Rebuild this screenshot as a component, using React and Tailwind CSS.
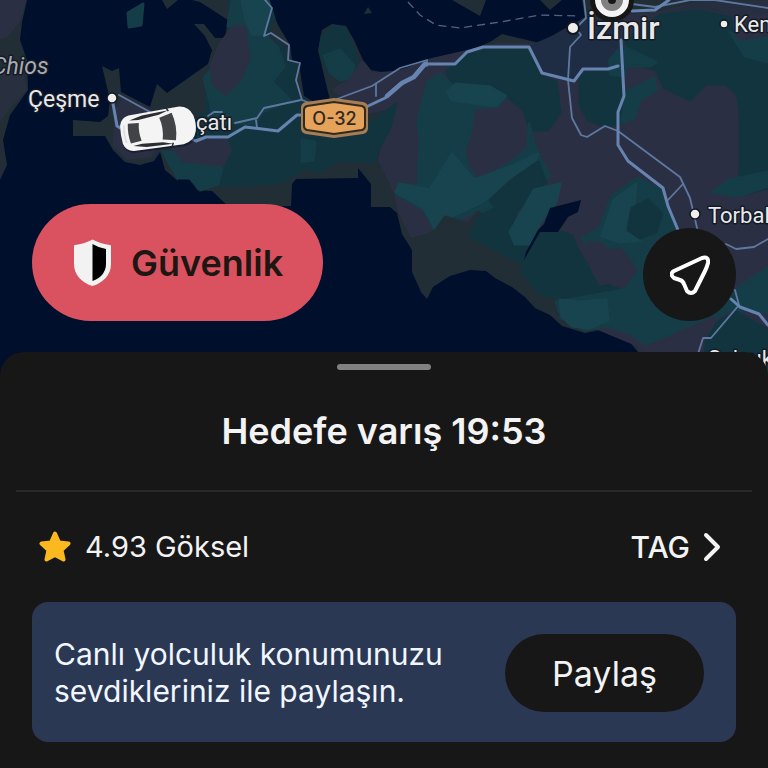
const SEA = '#000f2c'
const LAND = '#222e36'
const PLUM = '#2b2f44'
const PINE = '#12343f'
const MOSS = '#153d48'
const TEAL = '#18444f'
const SLATE = '#1f2d44'

const patches = [
  // western slopes
  { fill: PINE, d: 'M228 0H268L274 18L266 36L285 48L287 62L297 66L294 82L300 98L315 104L330 140L300 172L280 182L222 186L205 165L170 145L206 110V78L214 60L240 30Z' },
  { fill: MOSS, d: 'M232 0H268L271 10L264 34L278 48L284 66L272 82L290 100L262 112L255 124L215 122L204 78L214 66L235 90L248 60L240 28L228 26Z' },
  { fill: TEAL, d: 'M242 0H266L270 9L263 34L252 34L246 20Z' },
  { fill: PLUM, d: 'M234 26L245 28L249 58L240 80L226 94L213 84L211 66L220 44Z' },
  { fill: PLUM, d: 'M180 142L226 140L230 150L222 166L198 172L180 166L168 154Z' },
  { fill: MOSS, d: 'M163 152L172 152L182 164L222 168L218 184L200 190L190 178L178 178Z' },
  { fill: PLUM, d: 'M116 112L124 98L152 112L160 140L150 156L128 158L114 145Z' },
  { fill: MOSS, d: 'M128 13L143 4L141 25L129 27Z' },
  { fill: PLUM, d: 'M0 0H25L18 22L6 36L0 38Z' },
  { fill: '#282f3e', d: 'M0 76L22 72L25 90L8 108L0 120Z' },
  // central headland
  { fill: PINE, d: 'M322 36L333 26L345 28L353 46L359 70L344 82L328 72L320 52Z' },
  { fill: MOSS, d: 'M324 56L340 50L354 66L350 78L340 80L330 72Z' },
  { fill: PLUM, d: 'M334 90L350 80L362 62L372 74L400 72L430 60L500 44L544 45L562 33L586 20L768 2V384H650L638 345L590 325L560 318L530 295L510 265L450 225L412 236L399 210L396 194L380 160L384 138L392 108L368 112Z' },
  { fill: PINE, d: 'M302 142L330 136L372 122L396 104L390 128L378 150L374 162L340 160L318 172L302 166Z' },
  { fill: MOSS, d: 'M302 140L315 142L313 160L302 162Z' },
  { fill: PINE, d: 'M446 72L468 54L486 50H528L540 76L556 82L560 112L548 130L530 130L524 110L505 95L490 86L455 86Z' },
  { fill: MOSS, d: 'M428 82L440 74L453 86L490 87L506 96L498 106L474 108L470 134L464 150L468 168L478 181L512 162L528 148L529 124L536 150L550 176L530 196L500 208L470 214L445 224L435 230L424 210L396 194L398 184L418 186L420 140L418 120Z' },
  { fill: TEAL, d: 'M448 92L456 84L490 87L505 96L496 106L452 100Z' },
  { fill: TEAL, d: 'M452 154L474 180L512 166L538 154L532 168L498 192L478 204L452 216L436 230L424 208L396 192L400 184L430 190Z' },
  { fill: LAND, d: 'M436 230L445 217L468 224L478 212L520 240L530 260L540 285L560 300L564 318L552 312L537 304L527 293L514 284L497 275L488 268L470 267L448 273L430 284L415 270L413 246Z' },
  { fill: PINE, d: 'M538 162L512 180L490 200L496 208L480 216L470 236L488 246L520 262L530 244L512 236L516 212L530 196L546 182Z' },
  { fill: TEAL, d: 'M534 190L560 184L556 202L540 222L530 244L515 244L510 232L524 208Z' },
  { fill: PINE, d: 'M540 232L560 232L572 236L578 250L596 280L620 290L600 302L562 298L540 294L522 272L526 255Z' },
  // eastern valley
  { fill: SLATE, d: 'M530 47L564 32L586 18L620 30V66L584 70L573 80L544 74Z' },
  { fill: PINE, d: 'M580 74L622 70L620 124L604 126L588 120L580 104Z' },
  { fill: PINE, d: 'M626 40L662 14L700 8L730 16L734 44L768 58V145L748 150L740 115L738 96L726 84L706 84L690 100L664 88L656 70L628 62Z' },
  { fill: MOSS, d: 'M610 60L622 46L656 62L650 66L626 66L624 76L610 74Z' },
  { fill: MOSS, d: 'M654 78L656 90L640 100L634 118L622 122L626 92Z' },
  { fill: MOSS, d: 'M730 32L740 42L768 38V62L745 56Z' },
  { fill: PINE, d: 'M740 112L768 96V188L738 196L740 168Z' },
  { fill: MOSS, d: 'M712 192L730 180L768 172V186L738 196Z' },
  { fill: MOSS, d: 'M638 178L664 192L668 208L684 240L652 262L655 300L720 310L740 286L768 268V312L728 310L700 330L655 340L645 344L632 334L622 330L605 326L585 330L562 318L556 302L590 296L625 290L640 270L622 246L590 250L582 238L600 228L612 196Z' },
  { fill: TEAL, d: 'M560 300L580 302L606 300L608 320L590 328L572 326L562 316Z' },
  { fill: TEAL, d: 'M614 200L636 184L634 204L626 232L640 240L620 242L602 236Z' },
  { fill: PINE, d: 'M632 208L648 200L662 214L656 232L640 238L628 230Z' },
  { fill: PLUM, d: 'M588 242L602 244L612 258L624 262L631 268L618 280L600 284L592 268Z' },
  { fill: PLUM, d: 'M650 346L690 328L714 318L712 345L690 384H655Z' },
  { fill: PINE, d: 'M718 322L736 312L768 330V384H704L706 342Z' },
  { fill: '#262f40', d: 'M662 12L700 2H768V12L735 16L700 8Z' },
]

const minorRoads = [
  'M265 0L272 8L264 36L271 33L289 45L288 60L300 63L296 80L302 100L312 104',
  'M337 99L372 86L400 68L427 60V66',
  'M376 84V96',
  'M235 123L257 118L264 108L301 100',
  'M256 120L257 127',
  'M208 116L214 112H222',
  'M119 95L150 112',
  'M584 0L586 18L576 28L581 35L570 47L568 80L572 118L581 135L587 137L605 126L618 131L680 177L690 198L698 232',
  'M668 200L683 184',
  'M726 244L736 249L754 247L768 239',
  'M735 290L739 305L711 338H703L698 354',
  'M632 4L655 7L690 0H715L768 8',
]

const mainRoads = [
  'M112 98L117 126L130 134L190 138L196 141L206 137H228L245 127L278 131L297 115H310',
  'M366 107L385 98L400 84L413 77L424 64H455L467 52L483 47H529L542 73L574 81L583 69H608L618 66',
  'M621 40L624 96L618 112V145L628 161L663 188L668 206L678 230',
  'M632 11L655 10L669 0',
  'M731 299L740 307L759 314L768 325',
]

const places = [
  { name: 'Çeşme', x: 28, y: 107, size: 23 },
  { name: 'çatı', x: 196, y: 130, size: 22 },
  { name: 'İzmir', x: 587, y: 39, size: 32, weight: 500 },
  { name: 'Kemalpaşa', x: 734, y: 32, size: 22 },
  { name: 'Torbalı', x: 708, y: 223, size: 22 },
  { name: 'Selçuk', x: 708, y: 366, size: 22 },
]

function MapView() {
  return (
    <svg
      className="absolute inset-0 h-full w-full font-[Roboto,sans-serif]"
      viewBox="0 0 768 384"
      preserveAspectRatio="xMidYMid slice"
      role="img"
      aria-label="Harita"
    >
      <rect width="768" height="384" fill={SEA} />
      <g fill={LAND}>
        <path d="M0 0H27L22 22L20 40L27 60L28 90L10 115L3 140L7 165L0 180Z" />
        <path d="M102 66L112 71L119 68L121 92L150 107L157 84L167 93L208 64L212 50L205 36L194 24L204 24L215 38L225 38L228 20L200 2L192 0H268L278 25L290 45L292 60L299 64L304 96L314 102L330 100L327 88L318 50L322 30L332 24L346 26L354 40L363 60L371 70L386 73L430 62L462 54L490 42L502 34L540 43L562 30L585 18L582 0H768V384H645L638 352L622 333L605 329L585 333L562 326L550 315L535 308L525 297L512 287L495 278L486 271L470 270L450 276L433 287L427 299L421 292L412 272V250L402 234L397 213L390 207H371V184L358 168V178L296 179L292 184L291 206H228L212 191L197 190L190 178L178 168V181L165 170L160 152L154 161L140 165L125 162L113 150L105 136H73V120L100 122L108 116L110 100Z" />
        <path d="M162 0H178L167 9Z" />
        <path d="M452 0H486L480 16L466 8Z" />
        <path d="M364 14L368 7L372 13Z" />
        <path d="M540 0H562L550 10Z" />
      </g>
      {patches.map((p) => (
        <path key={p.d} d={p.d} fill={p.fill} stroke={p.fill} strokeWidth="3" strokeLinejoin="round" />
      ))}
      <path d="M550 208L581 200L578 212L568 217L558 232H540L524 260L526 252L538 230L544 224Z" fill={SEA} />
      <path d="M408 2L420 15L436 25L460 28L500 22L540 15L580 16" fill="none" stroke="#56617d" strokeWidth="1.3" strokeDasharray="8 5" />
      <g fill="none" stroke="#5f78a0" strokeLinejoin="round" strokeLinecap="round">
        {minorRoads.map((d) => (
          <path key={d} d={d} strokeWidth="1.8" />
        ))}
        {mainRoads.map((d) => (
          <path key={d} d={d} strokeWidth="3" stroke="#6784b0" />
        ))}
        <path d="M387 96L402 83L414 77L425 64" strokeWidth="4.5" stroke="#6784b0" />
      </g>

      {/* motorway shield */}
      <path d="M306 102L334 98L363 102Q368 103 368 108V128Q368 133 363 134L334 138L306 134Q301 133 301 128V108Q301 103 306 102Z" fill="#a67e55" />
      <path d="M307 106L334 102L362 106Q365 107 365 110V126Q365 129 362 130L334 134L307 130Q304 129 304 126V110Q304 107 307 106Z" fill="#e5a25a" stroke="#30291f" strokeWidth="2" />
      <text x="334.5" y="125" textAnchor="middle" fontSize="18" fill="#30291f" className="font-[Inter,sans-serif] font-medium">O-32</text>

      {/* destination marker */}
      <circle cx="612" cy="0" r="22" fill="#171717" />
      <circle cx="612" cy="0" r="14" fill="#818181" stroke="#f4f4f4" strokeWidth="6" />
      <circle cx="612" cy="0" r="4" fill="#171717" />

      <g fill="#f0eeeb" stroke="#101722">
        <circle cx="112" cy="98" r="5" strokeWidth="1.5" />
        <circle cx="573" cy="28" r="6" strokeWidth="2" />
        <circle cx="724" cy="24" r="4" strokeWidth="1.5" />
        <circle cx="695" cy="214" r="5" strokeWidth="1.5" />
      </g>
      <g fill="#e9e9ea" stroke="#141a25" strokeWidth="3" strokeLinejoin="round" paintOrder="stroke">
        <text x="-8" y="74" fontSize="23" fontStyle="italic" fill="#a9abb0">Chios</text>
        {places.map((p) => (
          <text key={p.name} x={p.x} y={p.y} fontSize={p.size} fontWeight={p.weight}>{p.name}</text>
        ))}
      </g>

      {/* vehicle */}
      <g transform="translate(158 129) rotate(-9)">
        <path d="M-38 -9Q-36 -17 -27 -18L23 -19Q34 -18 37 -8Q39 0 37 8Q34 18 23 19L-27 18Q-36 17 -38 9Q-39 0 -38 -9Z" fill="#00061a" opacity=".4" transform="translate(1 2)" />
        <path d="M-37 -9Q-35 -17 -27 -18L23 -19Q34 -18 37 -8Q39 0 37 8Q34 18 23 19L-27 18Q-35 17 -37 9Q-38 0 -37 -9Z" fill="#f4f4f5" />
        <path d="M-33 -9Q-35 0 -33 9" fill="none" stroke="#d9dadd" strokeWidth="1.5" />
        <path d="M-29 -10L-18 -9Q-20 0 -18 9L-29 10Q-31 0 -29 -10Z" fill="#414347" />
        <path d="M3 -11L16 -14Q20 0 16 14L3 11Q6 0 3 -11Z" fill="#414347" />
        <path d="M-27 -13L-14 -16L13 -17L3 -14L-18 -12Z" fill="#2b2d31" />
        <path d="M-27 13L-14 16L13 17L3 14L-18 12Z" fill="#2b2d31" />
        <path d="M11 -20L13 -16M11 20L13 16" stroke="#26282c" strokeWidth="1.5" />
      </g>
    </svg>
  )
}

function ShieldIcon() {
  return (
    <svg className="h-12 w-[37px] shrink-0" viewBox="0 0 37 48" aria-hidden="true">
      <path d="M17.5 1Q18.5 0 19.5 1Q27 5 36 6Q37 6 37 7V25C37 36 29 44 18.5 47C8 44 0 36 0 25V7Q0 6 1 6Q10 5 17.5 1Z" fill="#f2f2f2" />
      <path d="M18.5 5Q25 9 32 10V25C32 33 27 39 18.5 42Z" fill="#000" />
    </svg>
  )
}

function StarIcon() {
  return (
    <svg className="h-8 w-8 shrink-0" viewBox="0 0 32 32" aria-hidden="true">
      <path d="M16 2.500L20 11.500L29.500 12.500L22.500 19L24.500 28.500L16 24L7.500 28.500L9.500 19L2.500 12.500L12 11.500Z" fill="#fbb91f" stroke="#fbb91f" strokeWidth="4" strokeLinejoin="round" />
    </svg>
  )
}

export default function App() {
  return (
    <main className="flex min-h-screen flex-col bg-[#171717] font-[Inter,sans-serif] text-[#f3f3f3]">
      <section className="relative flex h-96 items-end justify-between overflow-hidden px-8 pb-[63px]">
        <MapView />
        <button type="button" className="relative flex h-[117px] items-center gap-5 rounded-full bg-[#da525f] pr-10 pl-[42px] text-4xl font-semibold text-[#1d1713]">
          <ShieldIcon />
          Güvenlik
        </button>
        <button type="button" aria-label="Konumu ortala" className="relative flex size-[93px] items-center justify-center rounded-full bg-[#171717]">
          <svg className="size-10" viewBox="0 0 40 40" fill="none" stroke="#fff" strokeWidth="4" strokeLinejoin="round" aria-hidden="true">
            <path d="M4 16L32 3Q39 1 38 8Q37 12 35 16L25 36Q21 40 17 36L14 29Q13 26 10 25L4 23Q-1 19 4 16Z" />
          </svg>
        </button>
      </section>

      <section className="relative -mt-8 flex grow flex-col rounded-t-3xl bg-[#171717] pb-6">
        <div className="mx-auto mt-3 h-[6px] w-[94px] rounded-full bg-[#818181]" />
        <h1 className="mt-9 text-center text-4xl leading-[50px] font-semibold">Hedefe varış 19:53</h1>
        <hr className="mx-4 mt-[34px] border-t-2 border-[#292929]" />

        <div className="mx-8 flex h-[110px] items-center justify-between pr-[14px] pl-[7px]">
          <p className="flex items-center gap-[14px] text-[29px]">
            <StarIcon />
            4.93 Göksel
          </p>
          <button type="button" className="flex items-center gap-3 text-3xl font-medium">
            TAG
            <svg className="h-8 w-5" viewBox="0 0 20 32" fill="none" stroke="currentColor" strokeWidth="4" strokeLinecap="round" strokeLinejoin="round" aria-hidden="true">
              <path d="M4 4L16 16L4 28" />
            </svg>
          </button>
        </div>

        <div className="mx-8 flex h-[140px] items-center justify-between gap-6 rounded-2xl bg-[#2b3854] pt-[2px] pr-8 pl-[22px]">
          <p className="text-3xl leading-[37px] text-[#f1f6ff]">
            Canlı yolculuk konumunuzu
            <br />
            sevdikleriniz ile paylaşın.
          </p>
          <button type="button" className="h-[78px] w-[199px] shrink-0 rounded-full bg-[#171717] text-[34px]">Paylaş</button>
        </div>
      </section>
    </main>
  )
}
